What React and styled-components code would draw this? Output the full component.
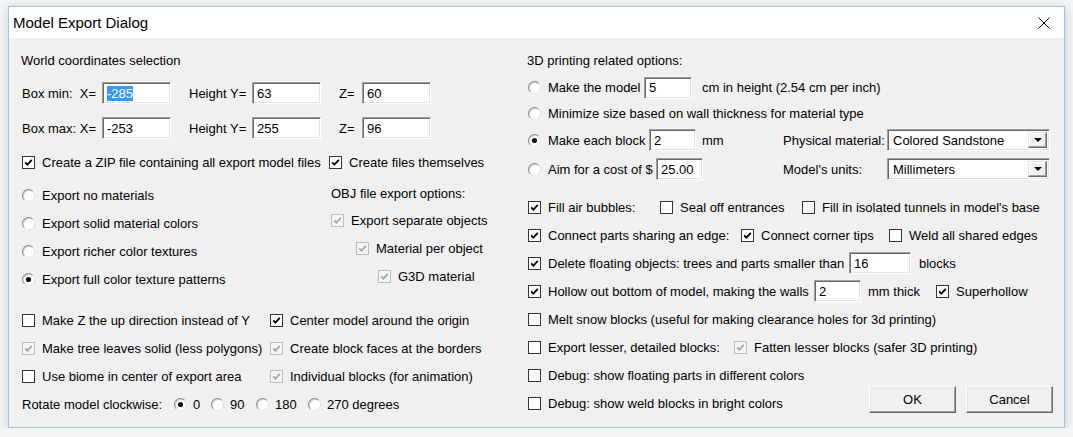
import React from 'react';
import styled, { createGlobalStyle } from 'styled-components';

const GlobalStyle = createGlobalStyle`
  html, body {
    margin: 0;
    background: #f4f4f4;
  }
  body {
    font-family: 'Liberation Sans', Arial, sans-serif;
    font-size: 13px;
    color: #000;
  }
`;

const Page = styled.div`
  padding: 6px 0 0 8px;
`;

const Window = styled.div`
  width: 1057px;
  height: 422px;
  box-sizing: border-box;
  border: 1px solid #9cc3ea;
  background: #f0f0f0;
  display: flex;
  flex-direction: column;
  box-shadow: 0 2px 10px rgba(0, 0, 0, 0.16);
`;

const TitleBar = styled.div`
  height: 31px;
  flex: none;
  background: #fff;
  display: flex;
  align-items: center;
  justify-content: space-between;
  padding: 0 14px 0 4px;
`;

const Title = styled.span`
  font-size: 15px;
  color: #000;
`;

const Body = styled.div`
  flex: 1;
  display: grid;
  grid-template-columns: 506px 1fr;
  padding: 8px 0 0 13px;
`;

const Column = styled.div`
  display: flex;
  flex-direction: column;
`;

const Row = styled.div`
  display: flex;
  align-items: center;
  height: ${p => p.$h || 28}px;
  margin-top: ${p => p.$mt || 0}px;
  white-space: nowrap;
`;

const Cluster = styled.div`
  display: flex;
  align-items: center;
  flex: none;
  width: ${p => (p.$w ? `${p.$w}px` : 'auto')};
`;

const Text = styled.span`
  flex: none;
  width: ${p => (p.$w ? `${p.$w}px` : 'auto')};
  margin-left: ${p => p.$ml || 0}px;
  white-space: pre;
`;

const Heading = styled.span`
  margin-left: -1px;
`;

const OptionLabel = styled.label`
  display: flex;
  align-items: center;
  flex: none;
  gap: ${p => p.$gap ?? 7}px;
  width: ${p => (p.$w ? `${p.$w}px` : 'auto')};
  margin-left: ${p => p.$indent || 0}px;
  white-space: nowrap;
`;

const Box = styled.span`
  width: 13px;
  height: 13px;
  box-sizing: border-box;
  flex: none;
  display: flex;
  align-items: center;
  justify-content: center;
  border: 1px solid ${p => (p.$disabled ? '#bcbcbc' : '#333')};
  background: ${p => (p.$disabled ? '#f6f6f6' : '#fff')};
`;

const Circle = styled.span`
  width: 13px;
  height: 13px;
  box-sizing: border-box;
  flex: none;
  border-radius: 50%;
  border: 1px solid;
  border-color: #8a8a8a #e0e0e0 #e6e6e6 #8a8a8a;
  background: #fff;
  box-shadow: inset 1px 1px 0 #d4d4d4;
  display: flex;
  align-items: center;
  justify-content: center;
`;

const Dot = styled.span`
  width: 5px;
  height: 5px;
  border-radius: 50%;
  background: #000;
`;

const Field = styled.div`
  width: ${p => p.$w}px;
  height: 22px;
  box-sizing: border-box;
  flex: none;
  background: #fff;
  border: 1px solid;
  border-color: #a0a0a0 #fff #fff #a0a0a0;
  box-shadow: inset 1px 1px 0 #696969, inset -1px -1px 0 #e3e3e3;
  padding: 0 4px;
  display: flex;
  align-items: center;
`;

const Selected = styled.span`
  background: #3399ff;
  color: #fff;
  line-height: 15px;
`;

const SelectBox = styled(Field)`
  padding: 2px 2px 2px 5px;
  justify-content: space-between;
`;

const DropButton = styled.span`
  width: 19px;
  height: 100%;
  box-sizing: border-box;
  background: #f0f0f0;
  border: 1px solid;
  border-color: #e3e3e3 #696969 #696969 #e3e3e3;
  box-shadow: inset -1px -1px 0 #a0a0a0, inset 1px 1px 0 #fff;
  display: flex;
  align-items: center;
  justify-content: center;
`;

const Arrow = styled.span`
  width: 0;
  height: 0;
  border-left: 4px solid transparent;
  border-right: 4px solid transparent;
  border-top: 4px solid #000;
`;

const Split = styled.div`
  display: grid;
  grid-template-columns: ${p => p.$left}px auto;
  margin-top: ${p => p.$mt || 0}px;
`;

const BottomArea = styled.div`
  display: flex;
  justify-content: space-between;
  align-items: flex-end;
`;

const Buttons = styled.div`
  display: flex;
  gap: 10px;
  margin: 0 11px 4px 0;
`;

const Button = styled.button`
  width: 87px;
  height: 27px;
  font: inherit;
  color: #000;
  background: #f0f0f0;
  border: 1px solid;
  border-color: #fff #696969 #696969 #fff;
  box-shadow: inset -1px -1px 0 #a0a0a0, inset 1px 1px 0 #e3e3e3;
  padding: 0;
`;

const Check = ({ checked, disabled }) => (
  <Box $disabled={disabled}>
    {checked && (
      <svg width="9" height="9" viewBox="0 0 9 9">
        <path
          d="M1.2 4.3 L3.4 6.6 L7.8 1.8"
          fill="none"
          stroke={disabled ? '#a6a6a6' : '#000'}
          strokeWidth="1.8"
        />
      </svg>
    )}
  </Box>
);

const Radio = ({ checked }) => <Circle>{checked && <Dot />}</Circle>;

const CheckOption = ({ label, checked, disabled, w, indent }) => (
  <OptionLabel $w={w} $indent={indent}>
    <Check checked={checked} disabled={disabled} />
    <span>{label}</span>
  </OptionLabel>
);

const RadioOption = ({ label, checked, w, gap }) => (
  <OptionLabel $w={w} $gap={gap}>
    <Radio checked={checked} />
    <span>{label}</span>
  </OptionLabel>
);

const Select = ({ value }) => (
  <SelectBox $w={163}>
    <span>{value}</span>
    <DropButton>
      <Arrow />
    </DropButton>
  </SelectBox>
);

const CloseIcon = () => (
  <svg width="12" height="12" viewBox="0 0 12 12">
    <path d="M0.5 0.5 L11.5 11.5 M11.5 0.5 L0.5 11.5" stroke="#000" strokeWidth="1" fill="none" />
  </svg>
);

const CoordRow = ({ label, x, y, z, h, selected }) => (
  <Row $h={h}>
    <Text $w={80}>{label}</Text>
    <Field $w={69}>{selected ? <Selected>{x}</Selected> : x}</Field>
    <Text $w={63} $ml={18}>Height Y=</Text>
    <Field $w={69}>{y}</Field>
    <Text $w={23} $ml={18}>Z=</Text>
    <Field $w={69}>{z}</Field>
  </Row>
);

const App = () => {
  return (
    <Page>
      <GlobalStyle />
      <Window>
        <TitleBar>
          <Title>Model Export Dialog</Title>
          <CloseIcon />
        </TitleBar>
        <Body>
          {/* ----- left side ----- */}
          <Column>
            <Row>
              <Heading>World coordinates selection</Heading>
            </Row>
            <CoordRow h={38} label={'Box min:  X='} x="-285" y="63" z="60" selected />
            <CoordRow h={32} label="Box max: X=" x="-253" y="255" z="96" />
            <Row $h={36}>
              <CheckOption w={307} checked label="Create a ZIP file containing all export model files" />
              <CheckOption checked label="Create files themselves" />
            </Row>

            <Split $left={309} $mt={1}>
              <Column>
                <Row>
                  <RadioOption label="Export no materials" />
                </Row>
                <Row>
                  <RadioOption label="Export solid material colors" />
                </Row>
                <Row>
                  <RadioOption label="Export richer color textures" />
                </Row>
                <Row>
                  <RadioOption checked label="Export full color texture patterns" />
                </Row>
              </Column>
              <Column>
                <Row $h={25}>
                  <span>OBJ file export options:</span>
                </Row>
                <Row>
                  <CheckOption checked disabled label="Export separate objects" />
                </Row>
                <Row>
                  <CheckOption indent={25} checked disabled label="Material per object" />
                </Row>
                <Row>
                  <CheckOption indent={47} checked disabled label="G3D material" />
                </Row>
              </Column>
            </Split>

            <Split $left={248} $mt={13}>
              <Column>
                <Row>
                  <CheckOption label="Make Z the up direction instead of Y" />
                </Row>
                <Row>
                  <CheckOption checked disabled label="Make tree leaves solid (less polygons)" />
                </Row>
                <Row>
                  <CheckOption label="Use biome in center of export area" />
                </Row>
              </Column>
              <Column>
                <Row>
                  <CheckOption checked label="Center model around the origin" />
                </Row>
                <Row>
                  <CheckOption checked disabled label="Create block faces at the borders" />
                </Row>
                <Row>
                  <CheckOption checked disabled label="Individual blocks (for animation)" />
                </Row>
              </Column>
            </Split>

            <Row>
              <Text $w={152}>Rotate model clockwise:</Text>
              <RadioOption w={37} gap={6} checked label="0" />
              <RadioOption w={45} gap={6} label="90" />
              <RadioOption w={52} gap={6} label="180" />
              <RadioOption gap={6} label="270 degrees" />
            </Row>
          </Column>

          {/* ----- right side: 3D printing ----- */}
          <Column>
            <Row>
              <Heading>3D printing related options:</Heading>
            </Row>
            <Row $h={27}>
              <RadioOption w={116} label="Make the model" />
              <Field $w={48}>5</Field>
              <Text $ml={10}>cm in height (2.54 cm per inch)</Text>
            </Row>
            <Row $h={25}>
              <RadioOption label="Minimize size based on wall thickness for material type" />
            </Row>
            <Row>
              <Cluster $w={255}>
                <RadioOption w={121} checked label="Make each block" />
                <Field $w={47}>2</Field>
                <Text $ml={6}>mm</Text>
              </Cluster>
              <Text $w={104}>Physical material:</Text>
              <Select value="Colored Sandstone" />
            </Row>
            <Row $h={30}>
              <Cluster $w={255}>
                <RadioOption w={128} label="Aim for a cost of $" />
                <Field $w={47}>25.00</Field>
              </Cluster>
              <Text $w={104}>Model's units:</Text>
              <Select value="Millimeters" />
            </Row>

            <Row $mt={9}>
              <CheckOption w={132} checked label="Fill air bubbles:" />
              <CheckOption w={142} label="Seal off entrances" />
              <CheckOption label="Fill in isolated tunnels in model's base" />
            </Row>
            <Row>
              <CheckOption w={213} checked label="Connect parts sharing an edge:" />
              <CheckOption w={148} checked label="Connect corner tips" />
              <CheckOption label="Weld all shared edges" />
            </Row>
            <Row>
              <CheckOption w={321} checked label="Delete floating objects: trees and parts smaller than" />
              <Field $w={62}>16</Field>
              <Text $ml={8}>blocks</Text>
            </Row>
            <Row>
              <CheckOption w={286} checked label="Hollow out bottom of model, making the walls" />
              <Field $w={47}>2</Field>
              <Text $w={68} $ml={7}>mm thick</Text>
              <CheckOption checked label="Superhollow" />
            </Row>
            <Row>
              <CheckOption label="Melt snow blocks (useful for making clearance holes for 3d printing)" />
            </Row>
            <Row>
              <CheckOption w={206} label="Export lesser, detailed blocks:" />
              <CheckOption checked disabled label="Fatten lesser blocks (safer 3D printing)" />
            </Row>
            <BottomArea>
              <Column>
                <Row>
                  <CheckOption label="Debug: show floating parts in different colors" />
                </Row>
                <Row>
                  <CheckOption label="Debug: show weld blocks in bright colors" />
                </Row>
              </Column>
              <Buttons>
                <Button>OK</Button>
                <Button>Cancel</Button>
              </Buttons>
            </BottomArea>
          </Column>
        </Body>
      </Window>
    </Page>
  );
};

export default App;
